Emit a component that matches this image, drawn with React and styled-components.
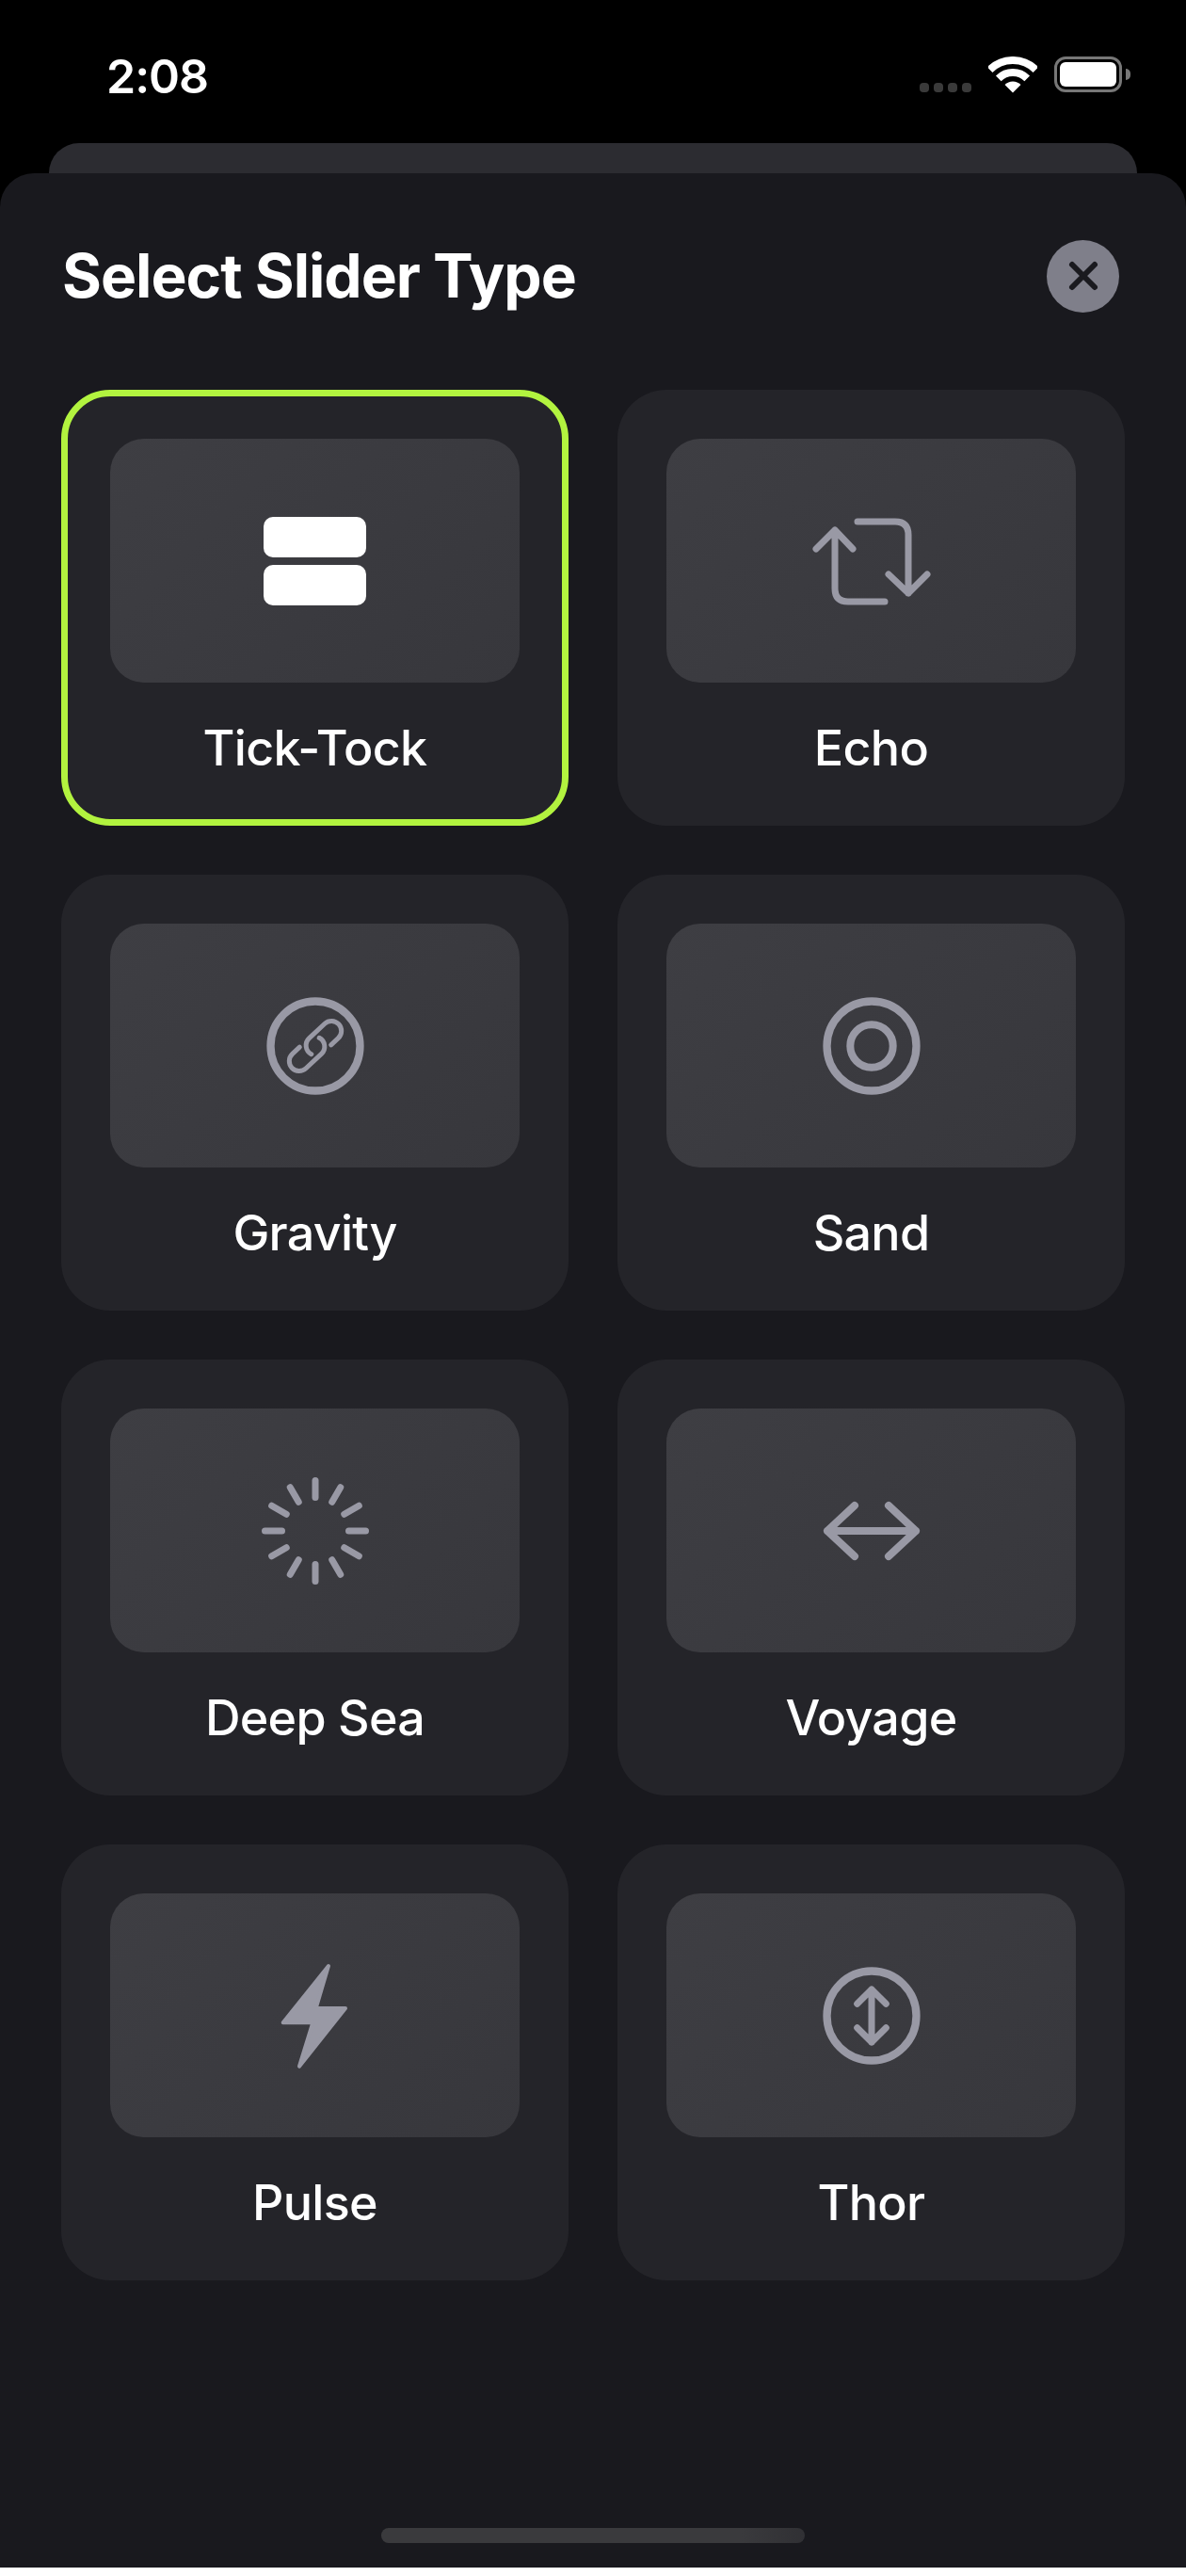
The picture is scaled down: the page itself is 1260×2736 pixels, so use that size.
import styled, { createGlobalStyle } from 'styled-components';

const GlobalStyle = createGlobalStyle`
  html, body {
    margin: 0;
    padding: 0;
    background: #fff;
  }
  * {
    box-sizing: border-box;
  }
`;

const Screen = styled.div`
  width: 1260px;
  height: 2727px;
  display: flex;
  flex-direction: column;
  background: #000;
  font-family: Inter, "Liberation Sans", sans-serif;
  color: #fff;
  overflow: hidden;
`;

const StatusBar = styled.div`
  height: 152px;
  flex: none;
  display: flex;
  justify-content: space-between;
  align-items: flex-start;
  padding: 60px 59px 0 113px;
`;

const Time = styled.div`
  margin-top: 1px;
  font-size: 50px;
  line-height: 40px;
  font-weight: 600;
  letter-spacing: -1px;
`;

const StatusIcons = styled.div`
  display: flex;
  align-items: flex-start;
`;

const SignalDots = styled.div`
  display: flex;
  gap: 5px;
  margin: 28px 18px 0 0;
`;

const Dot = styled.span`
  width: 10px;
  height: 10px;
  border-radius: 4px;
  background: #3a3a3a;
`;

const Battery = styled.div`
  display: flex;
  align-items: center;
  gap: 4px;
  margin-left: 18px;
`;

const BatteryBody = styled.div`
  width: 72px;
  height: 38px;
  padding: 3px;
  border: 3px solid #777;
  border-radius: 12px;
`;

const BatteryFill = styled.div`
  height: 100%;
  border-radius: 6px;
  background: #fff;
`;

const BatteryNub = styled.div`
  width: 5px;
  height: 12px;
  border-radius: 0 6px 6px 0;
  background: #777;
`;

const BackCard = styled.div`
  height: 32px;
  flex: none;
  margin: 0 52px;
  border-radius: 32px 32px 0 0;
  background: #2c2c31;
`;

const Sheet = styled.div`
  flex: 1;
  display: flex;
  flex-direction: column;
  border-radius: 36px 36px 0 0;
  background: #19191e;
`;

const Header = styled.div`
  display: flex;
  justify-content: space-between;
  align-items: center;
  height: 78px;
  margin-top: 70px;
  padding: 0 71px 0 66px;
`;

const Title = styled.h1`
  margin: 0;
  font-size: 64px;
  line-height: 70px;
  font-weight: 700;
  letter-spacing: -1px;
`;

const CloseButton = styled.button`
  width: 77px;
  height: 77px;
  padding: 0;
  display: flex;
  align-items: center;
  justify-content: center;
  border: none;
  border-radius: 50%;
  background: #7f7f8a;
`;

const Grid = styled.div`
  display: grid;
  grid-template-columns: 539px 539px;
  grid-auto-rows: 463px;
  gap: 52px;
  margin-top: 82px;
  padding: 0 65px;
`;

const Card = styled.div`
  display: flex;
  flex-direction: column;
  align-items: center;
  padding: 45px 45px 0;
  border: 7px solid ${(p) => (p.$selected ? '#b2f33f' : 'transparent')};
  border-radius: 52px;
  background: #242429;
`;

const Tile = styled.div`
  width: 100%;
  height: 259px;
  flex: none;
  display: flex;
  align-items: center;
  justify-content: center;
  border-radius: 36px;
  background: linear-gradient(135deg, #3e3e43, #37373c);
`;

const Label = styled.div`
  margin-top: 40px;
  font-size: 52px;
  line-height: 60px;
  font-weight: 500;
  letter-spacing: -0.7px;
`;

const HomeBar = styled.div`
  width: 450px;
  height: 16px;
  flex: none;
  margin: auto auto 26px;
  border-radius: 8px;
  background: linear-gradient(90deg, #3a3a3d 85%, #303034);
`;

const StackBlocks = styled.div`
  display: flex;
  flex-direction: column;
  gap: 8px;
  margin-top: 1px;
`;

const Block = styled.div`
  width: 109px;
  height: 43px;
  border-radius: 10px;
  background: #fff;
`;

const Icon = styled.svg.attrs({ viewBox: '-65 -65 130 130', width: 130, height: 130 })`
  display: block;
  fill: none;
  stroke: #9999a5;
  stroke-width: ${(p) => p.$weight || 7};
  stroke-linecap: round;
  stroke-linejoin: round;
`;

const TickTockIcon = () => (
  <StackBlocks>
    <Block />
    <Block />
  </StackBlocks>
);

const EchoIcon = () => (
  <Icon>
    <path d="M-15 -42H25Q39 -42 39 -28V34M18 14L39 34L59 14" />
    <path d="M-59 -13L-39 -33L-20 -13M-39 -33V29Q-39 43 -25 43H14" />
  </Icon>
);

const GravityIcon = () => (
  <Icon>
    <circle r="47.5" strokeWidth="8.3" />
    <g transform="rotate(-43)" strokeWidth="5">
      <path d="M-13 -10.5H-23.5A10.5 10.5 0 0 0 -23.5 10.5H-1A10.5 10.5 0 0 0 9 -3.5" />
      <path d="M13 10.5H23.5A10.5 10.5 0 0 0 23.5 -10.5H1A10.5 10.5 0 0 0 -9 3.5" />
    </g>
  </Icon>
);

const SandIcon = () => (
  <Icon>
    <circle r="47.5" strokeWidth="8.3" />
    <circle r="22.7" strokeWidth="8" />
  </Icon>
);

const spinnerTicks = Array.from({ length: 12 }, (_, i) => i * 30);

const DeepSeaIcon = () => (
  <Icon>
    {spinnerTicks.map((angle) => (
      <line key={angle} x1="0" y1="-35.5" x2="0" y2="-53.5" transform={`rotate(${angle})`} />
    ))}
  </Icon>
);

const VoyageIcon = () => (
  <Icon $weight={8}>
    <path d="M-47 0H47M-18 -27L-47 0L-18 27M18 -27L47 0L18 27" />
  </Icon>
);

const PulseIcon = () => (
  <Icon>
    <path
      d="M14 -53L0.7 -8H32L-17 53.7L-2.7 7.3H-34.3Z"
      fill="#9999a5"
      strokeWidth="4"
    />
  </Icon>
);

const ThorIcon = () => (
  <Icon>
    <circle r="47.5" strokeWidth="8.3" />
    <path d="M0 -28V28M-15.3 -12.7L0 -28L15.3 -12.7M-15.3 12.7L0 28L15.3 12.7" />
  </Icon>
);

const sliderTypes = [
  { name: 'Tick-Tock', icon: TickTockIcon, selected: true },
  { name: 'Echo', icon: EchoIcon },
  { name: 'Gravity', icon: GravityIcon },
  { name: 'Sand', icon: SandIcon },
  { name: 'Deep Sea', icon: DeepSeaIcon },
  { name: 'Voyage', icon: VoyageIcon },
  { name: 'Pulse', icon: PulseIcon },
  { name: 'Thor', icon: ThorIcon },
];

const App = () => (
  <Screen>
    <GlobalStyle />
    <StatusBar>
      <Time>2:08</Time>
      <StatusIcons>
        <SignalDots>
          <Dot />
          <Dot />
          <Dot />
          <Dot />
        </SignalDots>
        <svg width="52" height="39" viewBox="-26 -38.5 52 39">
          <path d="M-24.4 -24.4A34.5 34.5 0 0 1 24.4 -24.4" fill="none" stroke="#fff" strokeWidth="8" />
          <path d="M-15.2 -15.2A21.5 21.5 0 0 1 15.2 -15.2" fill="none" stroke="#fff" strokeWidth="8" />
          <path d="M0 0L-8.5 -8.5A12 12 0 0 1 8.5 -8.5Z" fill="#fff" />
        </svg>
        <Battery>
          <BatteryBody>
            <BatteryFill />
          </BatteryBody>
          <BatteryNub />
        </Battery>
      </StatusIcons>
    </StatusBar>
    <BackCard />
    <Sheet>
      <Header>
        <Title>Select Slider Type</Title>
        <CloseButton aria-label="Close">
          <svg width="34" height="34" viewBox="0 0 34 34" fill="none" stroke="#1a1a1f" strokeWidth="6" strokeLinecap="round">
            <path d="M5 5L29 29M29 5L5 29" />
          </svg>
        </CloseButton>
      </Header>
      <Grid>
        {sliderTypes.map(({ name, icon: TypeIcon, selected }) => (
          <Card key={name} $selected={selected}>
            <Tile>
              <TypeIcon />
            </Tile>
            <Label>{name}</Label>
          </Card>
        ))}
      </Grid>
      <HomeBar />
    </Sheet>
  </Screen>
);

export default App;
